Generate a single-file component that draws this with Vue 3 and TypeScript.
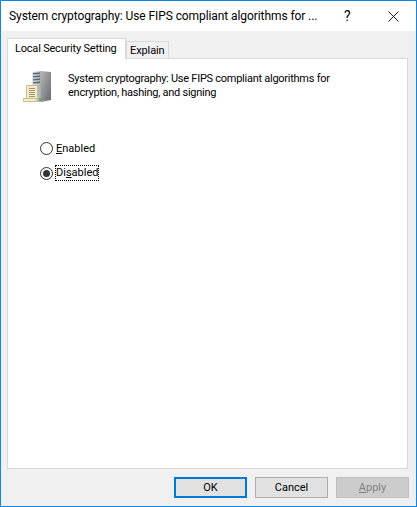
<template>
	<div class="dialog">
		<header class="title-bar">
			<span class="title-text">System cryptography: Use FIPS compliant algorithms for ...</span>
			<span class="help">?</span>
			<svg class="close" width="11" height="11" viewBox="0 0 11 11">
				<path d="M0.5 0.5L10.5 10.5M10.5 0.5L0.5 10.5" stroke="#1a1a1a" stroke-width="1" fill="none" />
			</svg>
		</header>

		<main class="content">
			<div class="tabs">
				<div class="tab active">Local Security Setting</div>
				<div class="tab">Explain</div>
			</div>

			<section class="panel">
				<div class="policy">
					<svg class="policy-icon" width="36" height="36" viewBox="0 0 36 36">
						<defs>
							<linearGradient id="front" x1="0" y1="0" x2="1" y2="0">
								<stop offset="0" stop-color="#e4e8ea" />
								<stop offset="1" stop-color="#a3abb0" />
							</linearGradient>
							<linearGradient id="side" x1="0" y1="0" x2="1" y2="1">
								<stop offset="0" stop-color="#b4b6b8" />
								<stop offset="1" stop-color="#66696b" />
							</linearGradient>
						</defs>
						<path d="M12 3L21 2V33H12Z" fill="url(#front)" />
						<path d="M21 2L31 3V31L21 33Z" fill="url(#side)" />
						<path d="M13 4L20 3.5V5L13 5.5ZM13 7L20 6.5V8L13 8.5ZM13 10L20 9.5V11L13 11.5ZM13 13L20 12.5V14L13 14.5Z" fill="#5b6a74" />
						<rect x="19" y="29" width="2" height="3" fill="#57b848" />
						<path d="M6.5 16.5H17.5V29.5H6.5Z" fill="#f6ecc4" stroke="#c8bb88" stroke-width="1" />
						<path d="M9 19.5H15M9 21.5H15M9 23.5H15M9 25.5H15M9 27.5H15" stroke="#9a988a" stroke-width="1" />
						<path d="M3.5 29.5H17.5L15.5 32.5H3.5Z" fill="#f8eec8" stroke="#c8bb88" stroke-width="1" />
					</svg>
					<p class="policy-text">System cryptography: Use FIPS compliant algorithms for<br />encryption, hashing, and signing</p>
				</div>

				<div class="options">
					<label class="option">
						<span class="radio"></span>
						<span><u>E</u>nabled</span>
					</label>
					<label class="option">
						<span class="radio checked"></span>
						<span class="focused">Di<u>s</u>abled</span>
					</label>
				</div>
			</section>

			<footer class="buttons">
				<button class="btn default">OK</button>
				<button class="btn">Cancel</button>
				<button class="btn disabled"><u>A</u>pply</button>
			</footer>
		</main>
	</div>
</template>

<script setup lang="ts">
</script>

<style>
html,
body {
	margin: 0;
	background: #fff;
}
</style>

<style scoped>
.dialog {
	box-sizing: border-box;
	width: 417px;
	height: 507px;
	display: flex;
	flex-direction: column;
	border: 1px solid #0f86e3;
	background: #f0f0f0;
	color: #000;
	font-family: Roboto, "Noto Sans", sans-serif;
	font-size: 11px;
	overflow: hidden;
}

.title-bar {
	height: 30px;
	flex: none;
	display: flex;
	align-items: center;
	background: #fff;
	padding-left: 8px;
}

.title-text {
	width: 335px;
	font-size: 12px;
	letter-spacing: -0.085px;
	white-space: nowrap;
}

.help {
	width: 17px;
	font-size: 14px;
}

.close {
	margin-left: 27px;
}

.content {
	flex: 1;
	display: flex;
	flex-direction: column;
	padding: 7px 7px 0 6px;
}

.tabs {
	height: 20px;
	display: flex;
	align-items: flex-end;
	position: relative;
	z-index: 1;
}

.tab {
	box-sizing: border-box;
	height: 17px;
	padding: 0 3px;
	line-height: 17px;
	background: #f0f0f0;
	border: 1px solid #d9d9d9;
	border-bottom: none;
	letter-spacing: -0.1px;
	white-space: nowrap;
}

.tab.active {
	height: 21px;
	margin-bottom: -1px;
	width: 119px;
	padding: 0 0 0 7px;
	line-height: 19px;
	letter-spacing: -0.2px;
	background: #fff;
}

.panel {
	box-sizing: border-box;
	height: 411px;
	margin-right: 1px;
	border: 1px solid #d9d9d9;
	background: #fff;
	padding: 10px 0 0 12px;
}

.policy {
	display: flex;
	align-items: flex-start;
}

.policy-icon {
	flex: none;
}

.policy-text {
	margin: 3px 0 0 12px;
	line-height: 14px;
	letter-spacing: -0.26px;
}

.options {
	display: flex;
	flex-direction: column;
	gap: 9px;
	margin: 35px 0 0 20px;
}

.option {
	height: 16px;
	display: flex;
	align-items: center;
	gap: 3px;
}

.radio {
	box-sizing: border-box;
	width: 13px;
	height: 13px;
	border: 1px solid #333;
	border-radius: 50%;
	background: #fff;
	display: flex;
	align-items: center;
	justify-content: center;
}

.radio.checked::after {
	content: "";
	width: 7px;
	height: 7px;
	border-radius: 50%;
	background: #333;
}

.focused {
	outline: 1px dotted #000;
	line-height: 14px;
}

.buttons {
	display: flex;
	justify-content: flex-end;
	gap: 8px;
	margin-top: 8px;
}

.btn {
	box-sizing: border-box;
	width: 73px;
	height: 21px;
	padding: 0;
	border: 1px solid #adadad;
	background: #e1e1e1;
	font: inherit;
	color: #000;
}

.btn.default {
	border: 2px solid #0078d7;
}

.btn.disabled {
	background: #cccccc;
	border-color: #bfbfbf;
	color: #838383;
}
</style>
